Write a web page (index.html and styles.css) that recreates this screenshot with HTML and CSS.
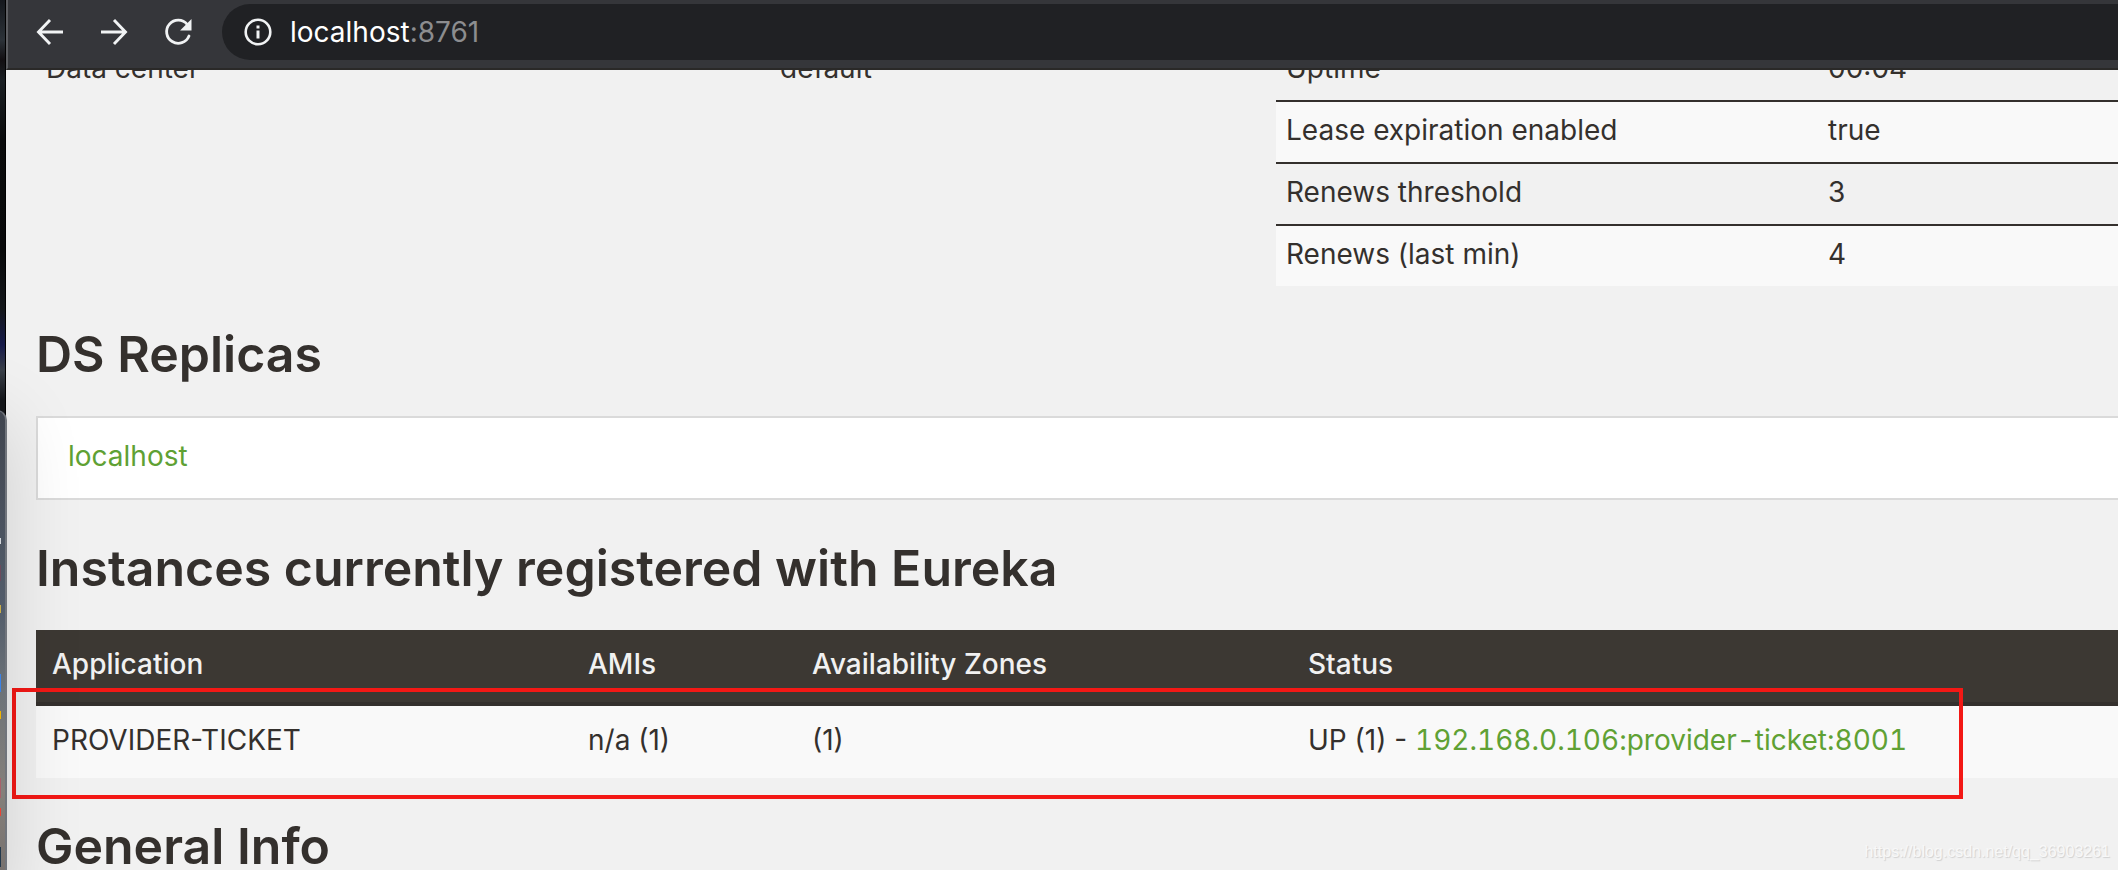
FILE: index.html
```html
<!DOCTYPE html>
<html lang="en">
<head>
<meta charset="utf-8">
<title>Eureka</title>
<link rel="stylesheet" href="styles.css">
</head>
<body>
<div class="screen">
  <div class="desktop" aria-hidden="true"></div>
  <div class="browser">
    <header class="toolbar">
      <button class="tool" type="button" aria-label="Back">
        <svg width="28" height="28" viewBox="0 0 28 28"><path d="M27 14H2.500M14 2L2.500 14L14 26" fill="none" stroke="#f1f3f4" stroke-width="2.900"/></svg>
      </button>
      <button class="tool" type="button" aria-label="Forward">
        <svg width="28" height="28" viewBox="0 0 28 28"><path d="M1 14H25.500M14 2L25.500 14L14 26" fill="none" stroke="#f1f3f4" stroke-width="2.900"/></svg>
      </button>
      <button class="tool" type="button" aria-label="Reload">
        <svg width="28" height="28" viewBox="0 0 28 28"><path d="M23.200 6.300A11.600 11.600 0 1 0 25 18" fill="none" stroke="#f1f3f4" stroke-width="2.800" stroke-linecap="round"/><path d="M27.500 1V12.400H16.100Z" fill="#f1f3f4"/></svg>
      </button>
      <div class="omnibox">
        <button class="site-info" type="button" aria-label="View site information">
          <svg width="28" height="28" viewBox="0 0 28 28"><circle cx="14" cy="14" r="12.300" fill="none" stroke="#f1f3f4" stroke-width="2.600"/><path d="M12.500 7.500h3v3h-3zM12.500 12.500h3v8h-3z" fill="#f1f3f4"/></svg>
        </button>
        <div class="address" role="textbox" contenteditable="true" spellcheck="false" aria-label="Address">localhost<span class="port">:8761</span></div>
      </div>
    </header>

    <main class="page">
      <section class="status">
        <table class="facts facts-env">
          <tbody>
            <tr><td>Data center</td><td>default</td></tr>
          </tbody>
        </table>
        <table class="facts facts-lease">
          <tbody>
            <tr><td>Uptime</td><td>00:04</td></tr>
            <tr><td>Lease expiration enabled</td><td>true</td></tr>
            <tr><td>Renews threshold</td><td>3</td></tr>
            <tr><td>Renews (last min)</td><td>4</td></tr>
          </tbody>
        </table>
      </section>

      <h1>DS Replicas</h1>
      <ul class="replicas">
        <li><a href="#">localhost</a></li>
      </ul>

      <h1>Instances currently registered with Eureka</h1>
      <div class="instances-wrap">
        <table class="instances">
          <thead>
            <tr><th class="app">Application</th><th class="amis">AMIs</th><th class="zones">Availability Zones</th><th>Status</th></tr>
          </thead>
          <tbody>
            <tr><td>PROVIDER-TICKET</td><td>n/a (1)</td><td>(1)</td><td>UP (1) - <a href="#">192.168.0.106:provider-ticket:8001</a></td></tr>
          </tbody>
        </table>
        <div class="marker"></div>
      </div>

      <h1>General Info</h1>
    </main>
  </div>

  <div class="side-window" aria-hidden="true">
    <svg class="side-icons" width="2" height="460" viewBox="0 0 2 460">
      <path d="M0 127h1v6H0z" fill="#d5d8dc"/>
      <path d="M0 154h1v16H0z" fill="#6b4a5c"/>
      <path d="M0 194h1v8H0z" fill="#c9ad49"/>
      <path d="M0 263h1v18H0z" fill="#3b82e6"/>
      <path d="M0 300h1v8H0z" fill="#f0b400"/>
      <path d="M0 367h1v20H0z" fill="#a8606a"/>
      <path d="M0 397h1v8H0z" fill="#ea4335"/>
      <path d="M0 436h1v20H0z" fill="#22384c"/>
    </svg>
  </div>
  <div class="watermark">https://blog.csdn.net/qq_36903261</div>
</div>
</body>
</html>
```
FILE: styles.css
```css
* {
  box-sizing: border-box;
}

body {
  margin: 0;
  font-family: Inter, "Open Sans", sans-serif;
  font-size: 28px;
  line-height: 40px;
  color: #34302d;
  background: #f1f1f1;
}

a {
  color: #5fa134;
  text-decoration: none;
  font-variant-numeric: tabular-nums;
}

.screen {
  position: relative;
  display: flex;
  height: 100vh;
  overflow: hidden;
}

.desktop {
  flex: none;
  width: 6px;
  border-right: 1px solid #000;
  background: linear-gradient(#15181d 0, #2c3238 40px, #120f12 60px, #1b2024 80px, #0a0b0c 140px, #08090a 250px, #14171b 310px, #161a4a 345px, #3a4049 370px, #14161a 400px);
}

.browser {
  flex: 1;
  min-width: 0;
  display: flex;
  flex-direction: column;
}

.toolbar {
  flex: none;
  display: flex;
  align-items: center;
  padding: 4px 0 8px 10px;
  background: #35363a;
  border-left: 2px solid #5d5e62;
  border-bottom: 2px solid #2a2928;
}

.tool,
.site-info {
  display: flex;
  align-items: center;
  justify-content: center;
  padding: 0;
  border: 0;
  background: none;
}

.tool {
  width: 64px;
  height: 56px;
}

.omnibox {
  flex: 1;
  display: flex;
  align-items: center;
  gap: 18px;
  height: 56px;
  margin-left: 12px;
  padding-left: 22px;
  border-radius: 28px 0 0 28px;
  background: #202124;
}

.address {
  flex: 1;
  color: #fff;
  outline: none;
}

.port {
  color: #8c8d8f;
}

.page {
  flex: 1;
  min-height: 0;
  overflow: hidden;
  padding-left: 30px;
}

.status {
  display: grid;
  grid-template-columns: 1210fr 842fr;
  gap: 30px;
  align-items: start;
  margin-top: -30px;
}

table {
  width: 100%;
  border-collapse: separate;
  border-spacing: 0;
  table-layout: fixed;
  text-align: left;
}

.facts td {
  padding: 8px 10px 12px;
}

.facts tr + tr td {
  border-top: 2px solid #34302d;
}

.facts tr:nth-child(even) td {
  background: #f9f9f9;
}

.facts-env td:first-child {
  width: 734px;
}

.facts-lease td:first-child {
  width: 542px;
}

h1 {
  margin: 42px 0 36px;
  font-size: 50px;
  line-height: 52px;
  font-weight: 600;
}

.replicas {
  margin: 0;
  padding: 0;
  list-style: none;
  border: 2px solid #dadada;
  border-right: 0;
  background: #fff;
}

.replicas li {
  padding: 18px 30px 22px;
}

.instances-wrap {
  position: relative;
}

.instances th,
.instances td {
  padding: 14px 16px 18px;
}

.instances th {
  font-weight: 500;
  color: #f1f1f1;
  background: #3c3833;
  border-bottom: 4px solid #34302d;
}

.instances td {
  background: #f9f9f9;
}

.instances .app {
  width: 536px;
}

.instances .amis {
  width: 224px;
}

.instances .zones {
  width: 496px;
}

.marker {
  position: absolute;
  top: 58px;
  right: 155px;
  bottom: -21px;
  left: -24px;
  border: 4px solid #f31815;
  pointer-events: none;
}

.side-window {
  position: absolute;
  top: 410px;
  bottom: -40px;
  left: -193px;
  width: 200px;
  border-top: 1px solid #6b707a;
  border-right: 2px solid #71757c;
  border-top-right-radius: 10px;
  background: linear-gradient(#40454f, #535d6b 200px, #6d7378 280px, #85807b 380px, #706a68);
  box-shadow: 0 10px 80px rgba(0, 0, 0, 0.14);
  pointer-events: none;
}

.side-icons {
  position: absolute;
  top: 0;
  left: 193px;
}

.watermark {
  position: absolute;
  right: 8px;
  bottom: 8px;
  font-family: "Liberation Sans", Arial, sans-serif;
  font-size: 16px;
  line-height: 20px;
  color: #f8f8f8;
  text-shadow: 1px 1px 1px #d0d0d0;
}
```
